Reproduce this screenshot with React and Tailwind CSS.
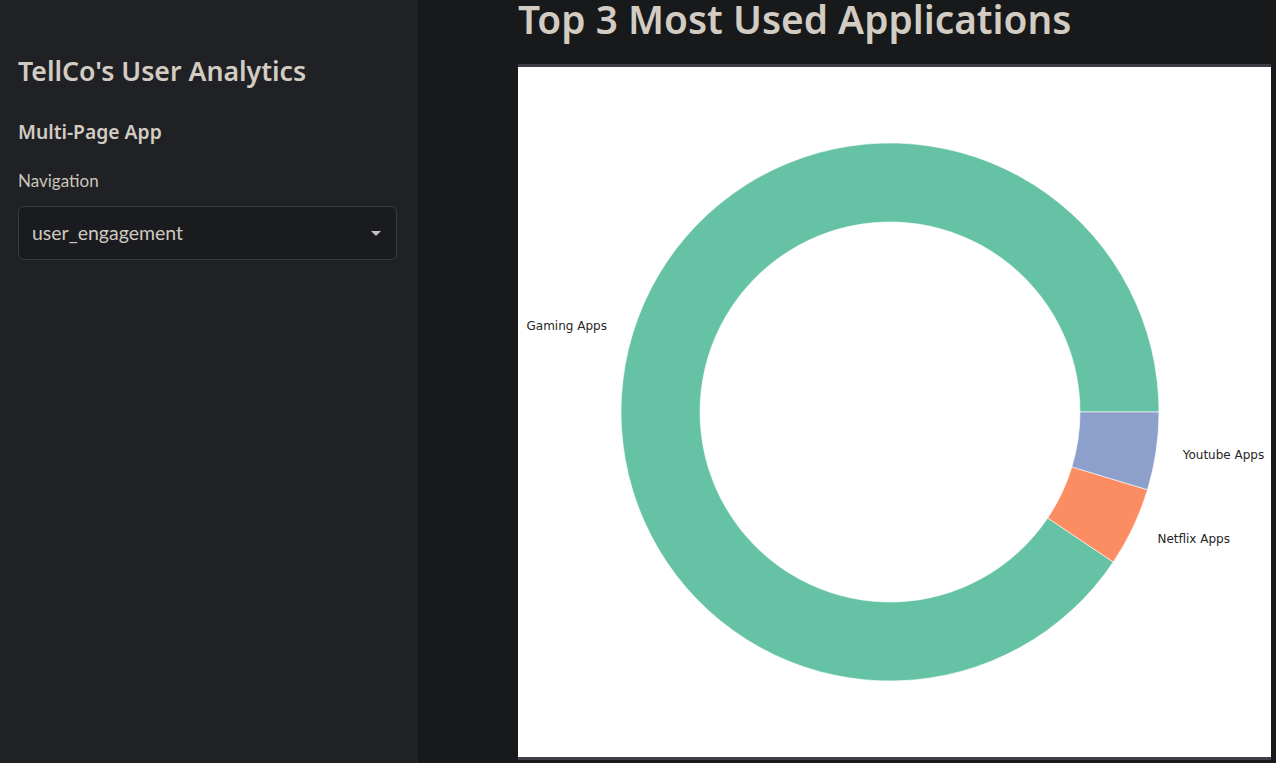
import React from "react";

// Donut chart data: matplotlib-style, counterclockwise from 3 o'clock
const slices = [
  { label: "Gaming Apps", from: 0, to: 326.1, color: "#66c2a5" },
  { label: "Netflix Apps", from: 326.1, to: 343.2, color: "#fc8d62" },
  { label: "Youtube Apps", from: 343.2, to: 360, color: "#8da0cb" },
];

const CX = 372;
const CY = 345;
const R_OUT = 269;
const R_IN = 190;

const pt = (r, deg) => {
  const a = (deg * Math.PI) / 180;
  return [CX + r * Math.cos(a), CY - r * Math.sin(a)];
};

const wedgePath = (from, to) => {
  const large = to - from > 180 ? 1 : 0;
  const [x1, y1] = pt(R_OUT, from);
  const [x2, y2] = pt(R_OUT, to);
  const [x3, y3] = pt(R_IN, to);
  const [x4, y4] = pt(R_IN, from);
  return `M${x1} ${y1} A${R_OUT} ${R_OUT} 0 ${large} 0 ${x2} ${y2} L${x3} ${y3} A${R_IN} ${R_IN} 0 ${large} 1 ${x4} ${y4} Z`;
};

const DonutChart = () => (
  <svg width="753" height="690" viewBox="0 0 753 690" className="block">
    {slices.map((s) => (
      <path key={s.label} d={wedgePath(s.from, s.to)} fill={s.color} stroke="#ffffff" strokeWidth="0.6" />
    ))}
    {slices.map((s) => {
      const mid = (s.from + s.to) / 2;
      const [x, y] = pt(R_OUT * 1.1, mid);
      return (
        <text
          key={s.label}
          x={x}
          y={y}
          textAnchor={x < CX ? "end" : "start"}
          dominantBaseline="central"
          fontFamily="'DejaVu Sans', sans-serif"
          fontSize="12"
          fill="#262626"
        >
          {s.label}
        </text>
      );
    })}
  </svg>
);

const headingFont = { fontFamily: "'Noto Sans', Lato, sans-serif" };

const Sidebar = () => (
  <aside className="w-[418px] shrink-0 h-full bg-[#202124] pl-[18px] pt-[53px] flex flex-col">
    <h2 className="text-[26.7px] leading-[36px] font-semibold text-[#d2ccc3]" style={headingFont}>TellCo's User Analytics</h2>
    <h3 className="mt-[29px] text-[19.3px] leading-[28px] font-semibold text-[#d2ccc3]" style={headingFont}>Multi-Page App</h3>
    <label className="mt-[23px] text-[17px] leading-[24px] text-[#cbc5bc]">Navigation</label>
    <div className="mt-[13px] w-[379px] h-[54px] rounded-md border border-[#3a3b3f] bg-[#1a1b1e] flex items-center justify-between pl-[13px] pr-[15px]">
      <span className="text-[19.5px] text-[#cfc9c0]">user_engagement</span>
      <span className="w-0 h-0 border-l-[5px] border-r-[5px] border-t-[5px] border-l-transparent border-r-transparent border-t-[#c8c4bd]" />
    </div>
  </aside>
);

export default function App() {
  return (
    <div className="h-screen w-full flex overflow-hidden bg-[#18191b]" style={{ fontFamily: "Lato, 'Noto Sans', sans-serif" }}>
      <Sidebar />
      <main className="flex-1 flex flex-col pl-[100px] pr-[5px]">
        <h1 className="text-[38.8px] leading-[38px] font-semibold text-[#d2ccc3] whitespace-nowrap" style={headingFont}>Top 3 Most Used Applications</h1>
        <div className="mt-[26px] w-[753px] border-t-[3px] border-b-[3px] border-t-[#3b3c46] border-b-[#40404c] bg-white">
          <DonutChart />
        </div>
      </main>
    </div>
  );
}
